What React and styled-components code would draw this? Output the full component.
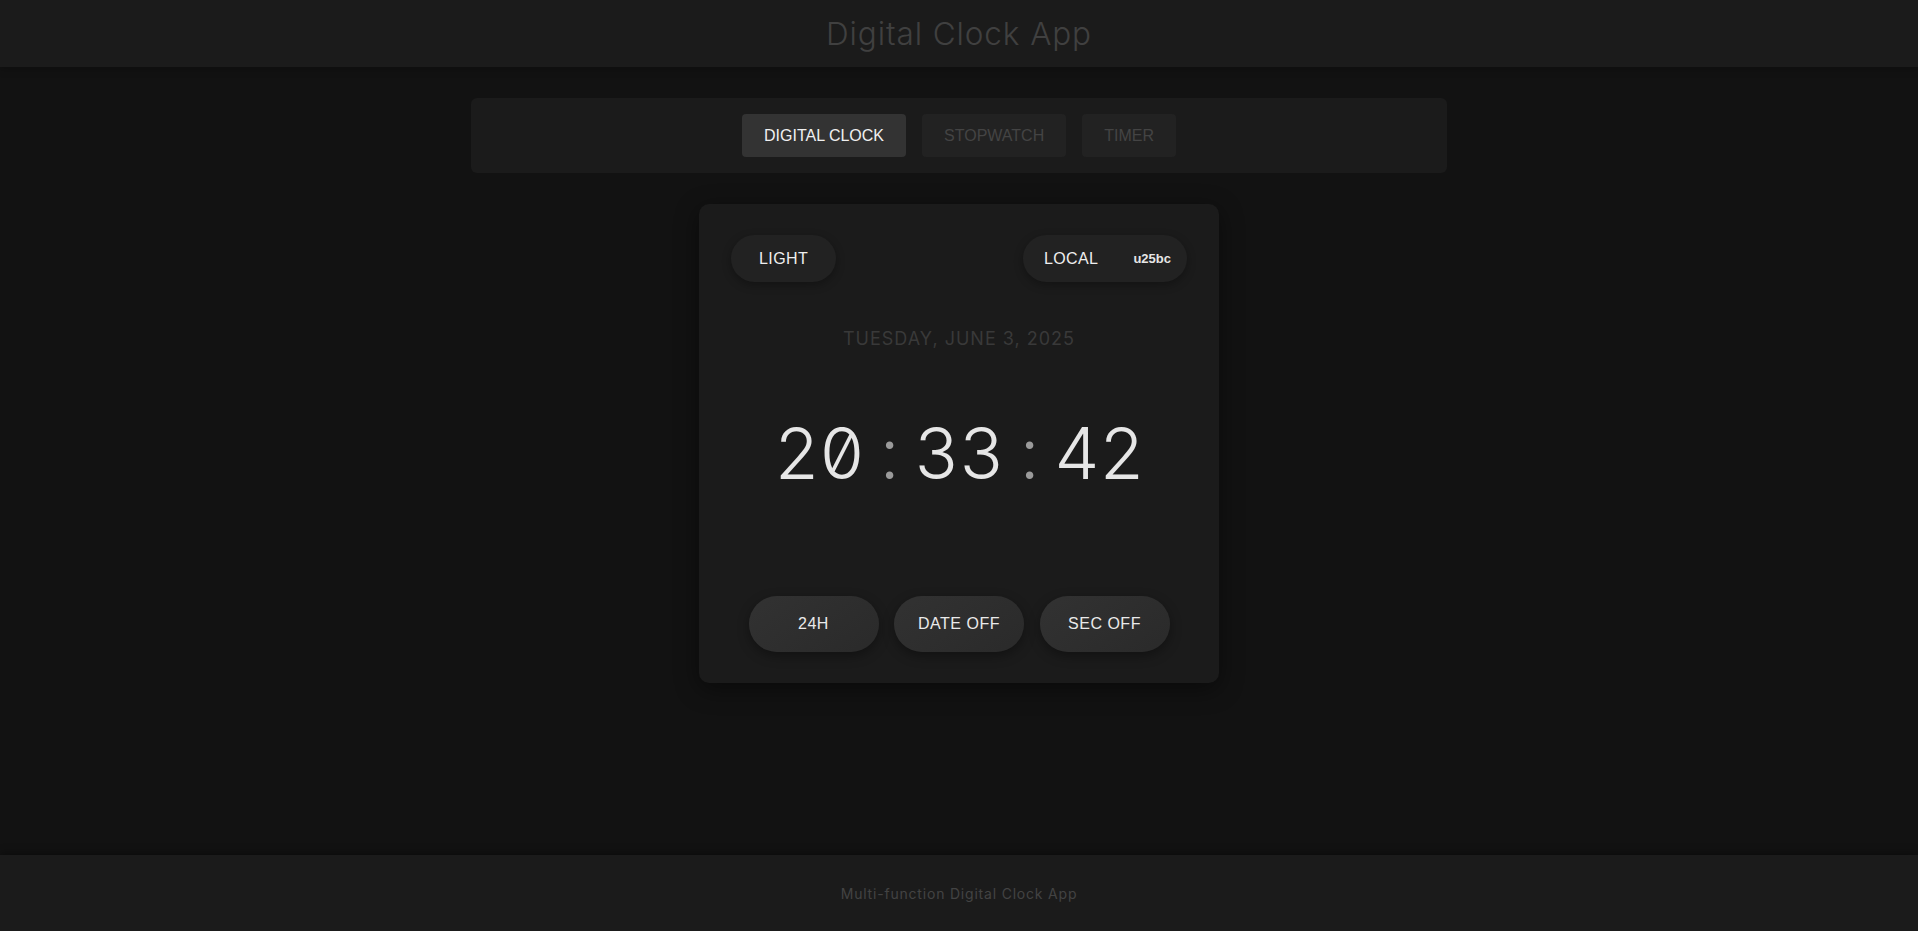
import React from "react";
import styled, { createGlobalStyle } from "styled-components";

const Global = createGlobalStyle`
  html, body { margin: 0; padding: 0; background: #121212; }
  body { font-family: "Liberation Sans", Arial, sans-serif; }
  #root { min-height: 100vh; }
`;

const Page = styled.div`
  min-height: 100vh;
  display: flex;
  flex-direction: column;
  background: #121212;
`;

const Header = styled.header`
  height: 67px;
  background: #1b1b1b;
  display: flex;
  align-items: center;
  justify-content: center;
  box-shadow: 0 2px 8px rgba(0, 0, 0, 0.25);
`;

const Title = styled.h1`
  margin: 0;
  font-family: Inter, "Noto Sans", sans-serif;
  font-weight: 300;
  font-size: 31.5px;
  letter-spacing: 0.9px;
  color: #404040;
`;

const Main = styled.main`
  flex: 1;
  display: flex;
  flex-direction: column;
  align-items: center;
  padding-top: 31px;
  gap: 31px;
`;

const Nav = styled.nav`
  width: 976px;
  height: 75px;
  box-sizing: border-box;
  background: #1b1b1b;
  border-radius: 6px;
  display: flex;
  align-items: center;
  justify-content: center;
  gap: 16px;
`;

const NavButton = styled.button`
  border: none;
  border-radius: 4px;
  height: 43px;
  padding: 0 22px;
  font-family: "Liberation Sans", Arial, sans-serif;
  font-size: 16px;
  background: ${(p) => (p.$active ? "#333333" : "#222222")};
  color: ${(p) => (p.$active ? "#f0f0f0" : "#444444")};
  cursor: pointer;
`;

const Card = styled.section`
  width: 520px;
  height: 479px;
  box-sizing: border-box;
  padding: 31px 32px;
  background: #1b1b1b;
  border-radius: 10px;
  box-shadow: 0 6px 24px rgba(0, 0, 0, 0.45);
  display: flex;
  flex-direction: column;
  align-items: center;
`;

const TopRow = styled.div`
  align-self: stretch;
  display: flex;
  justify-content: space-between;
  align-items: center;
`;

const Pill = styled.button`
  border: none;
  height: 47px;
  border-radius: 24px;
  background: #222222;
  color: #eeeeee;
  font-family: "Liberation Sans", Arial, sans-serif;
  font-size: 16px;
  letter-spacing: 0.4px;
  padding: ${(p) => p.$pad};
  display: flex;
  align-items: center;
  gap: 35px;
  box-shadow: 0 3px 10px rgba(0, 0, 0, 0.3);
`;

const Caret = styled.span`
  font-size: 13px;
  font-weight: 700;
  letter-spacing: 0;
  color: #e6e6e6;
`;

const DateText = styled.div`
  margin-top: 46px;
  font-family: Inter, "Noto Sans", sans-serif;
  font-weight: 400;
  font-size: 18px;
  letter-spacing: 1px;
  color: #393939;
`;

const Time = styled.div`
  margin-top: 61px;
  display: flex;
  align-items: baseline;
  font-family: Inter, "Noto Sans", sans-serif;
  font-weight: 300;
  font-size: 71px;
  font-feature-settings: "tnum" 1, "zero" 1;
  color: #e6e6e6;
  line-height: 87px;
`;

const Digits = styled.span`
  letter-spacing: -1px;
`;

const Colon = styled.span`
  color: #9a9a9a;
  margin: 0 15px 0 16px;
`;

const Controls = styled.div`
  margin-top: auto;
  display: flex;
  gap: 15.5px;
`;

const ControlButton = styled.button`
  border: none;
  width: 130px;
  height: 56px;
  border-radius: 28px;
  background: linear-gradient(145deg, #323232, #2a2a2a);
  color: #eaeaea;
  font-family: "Liberation Sans", Arial, sans-serif;
  font-size: 16px;
  letter-spacing: 0.5px;
  box-shadow: 0 4px 12px rgba(0, 0, 0, 0.35);
`;

const Footer = styled.footer`
  height: 76px;
  background: #1b1b1b;
  display: flex;
  align-items: center;
  justify-content: center;
  box-shadow: 0 -2px 8px rgba(0, 0, 0, 0.35);
`;

const FooterText = styled.p`
  margin: 0;
  font-family: Inter, "Noto Sans", sans-serif;
  font-size: 14px;
  letter-spacing: 0.8px;
  color: #434343;
`;

export default function App() {
  return (
    <Page>
      <Global />
      <Header>
        <Title>Digital Clock App</Title>
      </Header>
      <Main>
        <Nav>
          <NavButton $active>DIGITAL CLOCK</NavButton>
          <NavButton>STOPWATCH</NavButton>
          <NavButton>TIMER</NavButton>
        </Nav>
        <Card>
          <TopRow>
            <Pill $pad="0 28px">LIGHT</Pill>
            <Pill $pad="0 16px 0 21px">
              LOCAL<Caret>u25bc</Caret>
            </Pill>
          </TopRow>
          <DateText>TUESDAY, JUNE 3, 2025</DateText>
          <Time>
            <Digits>20</Digits>
            <Colon>:</Colon>
            <Digits>33</Digits>
            <Colon>:</Colon>
            <Digits>42</Digits>
          </Time>
          <Controls>
            <ControlButton>24H</ControlButton>
            <ControlButton>DATE OFF</ControlButton>
            <ControlButton>SEC OFF</ControlButton>
          </Controls>
        </Card>
      </Main>
      <Footer>
        <FooterText>Multi-function Digital Clock App</FooterText>
      </Footer>
    </Page>
  );
}
